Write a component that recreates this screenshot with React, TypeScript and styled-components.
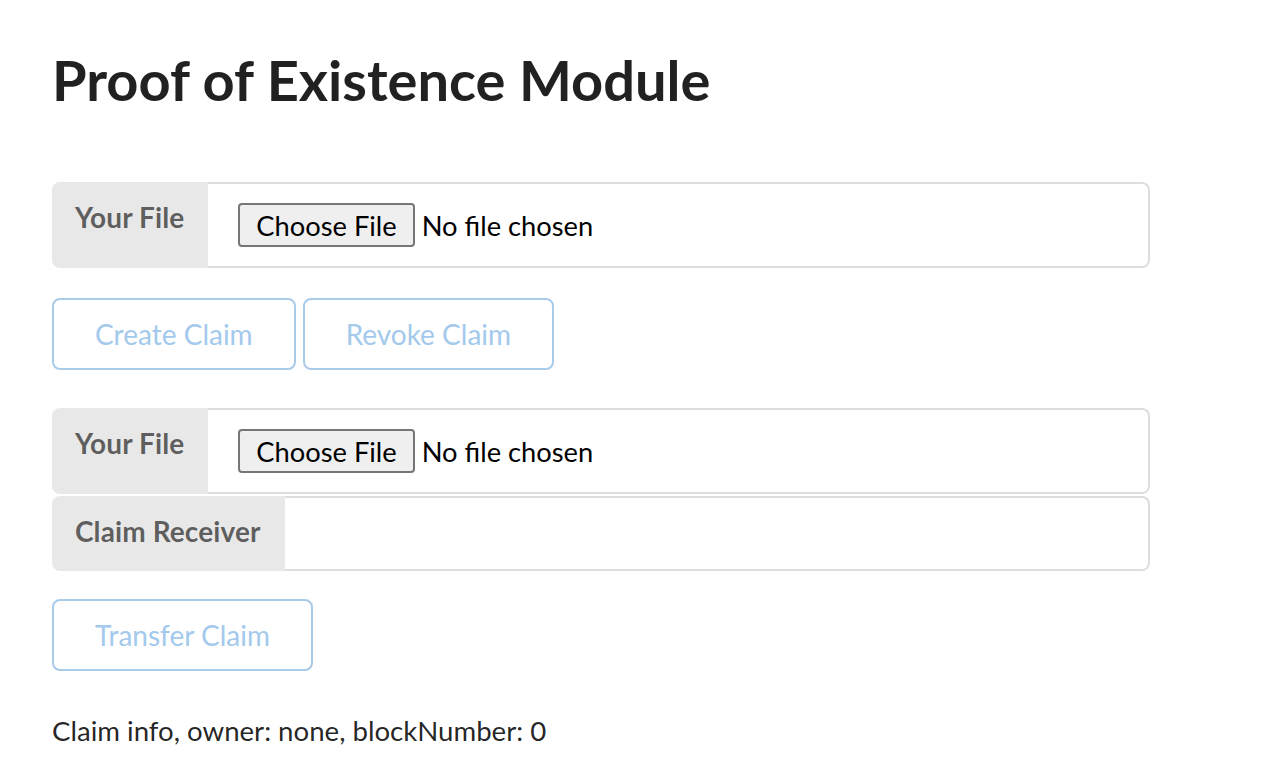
import React from 'react';
import styled, { createGlobalStyle } from 'styled-components';

const App = () => {
  return (
    <>
      <GlobalStyle />
      <Page>
        <Title>Proof of Existence Module</Title>
        <Form>
          <LabeledInput>
            <FieldLabel>Your File</FieldLabel>
            <FileField>
              <input type="file" />
            </FileField>
          </LabeledInput>
          <ButtonRow $gap={30}>
            <BasicButton disabled>Create Claim</BasicButton>
            <BasicButton disabled>Revoke Claim</BasicButton>
          </ButtonRow>
        </Form>
        <Form $top={38}>
          <LabeledInput>
            <FieldLabel>Your File</FieldLabel>
            <FileField>
              <input type="file" />
            </FileField>
          </LabeledInput>
          <LabeledInput $top={2}>
            <FieldLabel>Claim Receiver</FieldLabel>
            <TextField type="text" />
          </LabeledInput>
          <ButtonRow $gap={28}>
            <BasicButton disabled>Transfer Claim</BasicButton>
          </ButtonRow>
        </Form>
        <Info>Claim info, owner: none, blockNumber: 0</Info>
      </Page>
    </>
  );
};

const GlobalStyle = createGlobalStyle`
  html, body {
    margin: 0;
    padding: 0;
    background: #ffffff;
  }

  body {
    font-family: Lato, 'Helvetica Neue', Arial, sans-serif;
    font-size: 28px;
    color: rgba(0, 0, 0, 0.87);
  }
`;

const Page = styled.div`
  width: 1098px;
  padding: 44px 52px 0;
`;

const Title = styled.h1`
  margin: 0 0 66px;
  font-size: 56px;
  line-height: 72px;
  font-weight: 700;
  color: rgba(0, 0, 0, 0.87);
`;

const Form = styled.div<{ $top?: number }>`
  display: flex;
  flex-direction: column;
  margin-top: ${(p) => p.$top ?? 0}px;
`;

const LabeledInput = styled.div<{ $top?: number }>`
  display: flex;
  align-items: stretch;
  margin-top: ${(p) => p.$top ?? 0}px;
`;

const FieldLabel = styled.div`
  flex: none;
  padding: 21px 24px 0 23px;
  background: #e8e8e8;
  color: rgba(0, 0, 0, 0.6);
  font-size: 28px;
  font-weight: 700;
  line-height: 1;
  letter-spacing: 0.1px;
  border-radius: 8px 0 0 8px;
`;

const FileField = styled.div`
  flex: 1;
  display: flex;
  align-items: center;
  padding: 19px 30px;
  border: 2px solid rgba(34, 36, 38, 0.15);
  border-left: none;
  border-radius: 0 8px 8px 0;

  input {
    font-family: Lato, 'Helvetica Neue', Arial, sans-serif;
    font-size: 27.3px;
    color: #000;
  }

  input::file-selector-button {
    font-family: Lato, 'Helvetica Neue', Arial, sans-serif;
    font-size: 27.3px;
    height: 44px;
    padding: 0 16px 0 16px;
    margin-right: 7px;
    background: #efefef;
    color: #000;
    border: 2px solid #767676;
    border-radius: 4px;
  }
`;

const TextField = styled.input`
  flex: 1;
  min-width: 0;
  height: 75px;
  box-sizing: border-box;
  padding: 19px 28px;
  font-family: Lato, 'Helvetica Neue', Arial, sans-serif;
  font-size: 28px;
  border: 2px solid rgba(34, 36, 38, 0.15);
  border-left: none;
  border-radius: 0 8px 8px 0;
  outline: none;
`;

const ButtonRow = styled.div<{ $gap: number }>`
  display: flex;
  gap: 7px;
  margin-top: ${(p) => p.$gap}px;
`;

const BasicButton = styled.button`
  height: 72px;
  padding: 0 41px;
  font-family: Lato, 'Helvetica Neue', Arial, sans-serif;
  font-size: 28px;
  font-weight: 400;
  color: #a3c9ec;
  background: #ffffff;
  border: 2px solid #a9cbea;
  border-radius: 8px;
  cursor: default;
`;

const Info = styled.p`
  margin: 40px 0 0;
  font-size: 27.6px;
  line-height: 40px;
`;

export default App;
